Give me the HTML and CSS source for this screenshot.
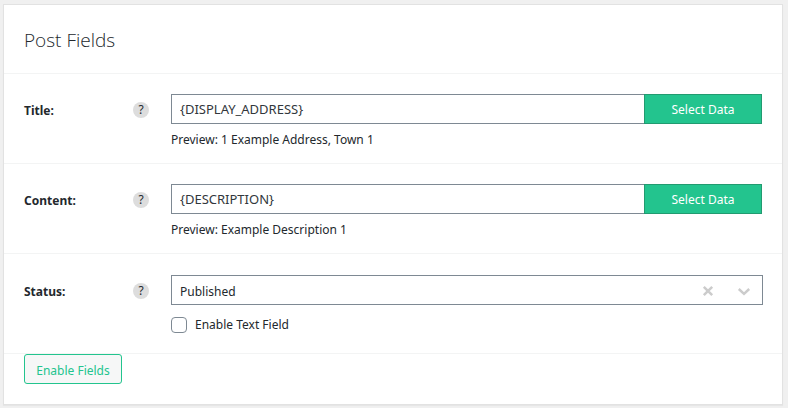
FILE: index.html
```html
<!DOCTYPE html>
<html lang="en">
<head>
<meta charset="utf-8">
<title>Post Fields</title>
<link rel="stylesheet" href="styles.css">
</head>
<body>
<form class="card">
  <h2 class="card-title">Post Fields</h2>
  <div class="field">
    <div class="field-head">
      <label for="title">Title:</label>
      <button type="button" class="help">?</button>
    </div>
    <div class="field-body">
      <div class="input-group">
        <input class="text-input" id="title" type="text" value="{DISPLAY_ADDRESS}">
        <button type="button" class="select-data">Select Data</button>
      </div>
      <p class="preview">Preview: 1 Example Address, Town 1</p>
    </div>
  </div>
  <div class="field">
    <div class="field-head">
      <label for="content">Content:</label>
      <button type="button" class="help">?</button>
    </div>
    <div class="field-body">
      <div class="input-group">
        <input class="text-input" id="content" type="text" value="{DESCRIPTION}">
        <button type="button" class="select-data">Select Data</button>
      </div>
      <p class="preview">Preview: Example Description 1</p>
    </div>
  </div>
  <div class="field field-choice">
    <div class="field-head">
      <label for="status">Status:</label>
      <button type="button" class="help">?</button>
    </div>
    <div class="field-body">
      <div class="dropdown">
        <select id="status"><option>Published</option></select>
        <div class="dropdown-icons">
          <svg width="20" height="20" viewBox="0 0 20 20"><path d="M5.8 5.8 14.2 14.2M14.2 5.8 5.8 14.2"/></svg>
          <svg width="20" height="20" viewBox="0 0 20 20"><path d="M4.8 8 10 12.8 15.2 8"/></svg>
        </div>
      </div>
      <label class="check"><input type="checkbox">Enable Text Field</label>
    </div>
  </div>
  <button type="button" class="enable">Enable Fields</button>
</form>
</body>
</html>
```
FILE: styles.css
```css
* {
  box-sizing: border-box;
}

body {
  margin: 0;
  padding: 4px 5px 3px 3px;
  background: #f0f0f0;
  color: #23282d;
  font: 12px/18px "Noto Sans", sans-serif;
}

button,
input,
select {
  margin: 0;
  font: inherit;
  color: inherit;
}

.card {
  padding-bottom: 20px;
  background: #fff;
  border: 1px solid #e2e2e2;
  box-shadow: 0 1px 1px rgba(0, 0, 0, 0.04);
}

.card-title {
  margin: 0;
  padding: 21px 20px 19px;
  border-bottom: 1px solid #f3f4f4;
  font-family: "Open Sans", sans-serif;
  font-size: 19px;
  font-weight: 300;
  line-height: 28px;
}

.field {
  display: flex;
  padding: 20px 20px 14px;
  border-bottom: 1px solid #f3f4f4;
}

.field-choice {
  padding: 21px 19px 19px 20px;
}

.field-head {
  display: flex;
  flex: none;
  align-items: center;
  justify-content: space-between;
  width: 125px;
  height: 32px;
  margin-right: 22px;
}

.field-head label {
  padding-top: 2px;
  font-weight: 700;
}

.help {
  width: 16px;
  height: 16px;
  padding: 0;
  border: 0;
  border-radius: 50%;
  background: #ddd;
  line-height: 16px;
  text-align: center;
}

.field-body {
  flex: 1;
  min-width: 0;
}

.input-group {
  display: flex;
}

.text-input {
  flex: 1;
  min-width: 0;
  height: 30px;
  padding: 0 8px;
  border: 1px solid #7e8993;
  border-right: 0;
  border-radius: 0;
  background: #fff;
  color: #32373c;
  font-size: 13px;
}

.select-data {
  width: 118px;
  height: 30px;
  padding: 2px 0 0;
  border: 1px solid #229b70;
  background: #23c48e;
  color: #fff;
}

.preview {
  margin: 7px 0 0;
}

.dropdown {
  position: relative;
}

.dropdown select {
  display: block;
  width: 100%;
  height: 30px;
  padding: 4px 8px 0;
  border: 1px solid #7e8993;
  border-radius: 0;
  background: #fff;
  appearance: none;
}

.dropdown-icons {
  position: absolute;
  top: 6px;
  right: 9px;
  display: flex;
  gap: 16px;
  pointer-events: none;
}

.dropdown-icons svg {
  fill: none;
  stroke: #ccc;
  stroke-width: 2.5;
}

.check {
  display: flex;
  align-items: center;
  gap: 8px;
  margin-top: 11px;
}

.check input {
  width: 16px;
  height: 16px;
  border: 1px solid #7e8993;
  border-radius: 4px;
  background: #fff;
  appearance: none;
}

.enable {
  display: block;
  width: 98px;
  height: 30px;
  margin-left: 20px;
  padding: 3px 0 0;
  border: 1px solid #23c48e;
  border-radius: 3px;
  background: #f6f7f7;
  color: #23c48e;
}
```
